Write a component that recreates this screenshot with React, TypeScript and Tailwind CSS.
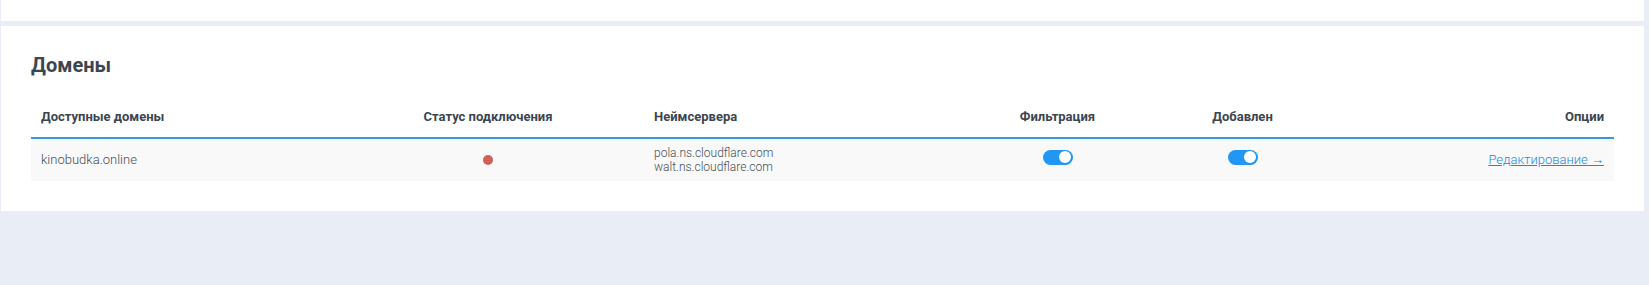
import React from "react";

function Toggle() {
  return (
    <span className="mb-[6px] inline-flex h-[15px] w-[30px] items-center justify-end rounded-full bg-[#2196f3] px-[1.5px]">
      <span className="h-[12px] w-[12px] rounded-full bg-white" />
    </span>
  );
}

export default function App() {
  return (
    <div
      className="min-h-[285px] w-full bg-[#e9edf5] pl-px pr-[5px]"
      style={{ fontFamily: "Roboto, 'Noto Sans', 'Liberation Sans', sans-serif" }}
    >
      <div className="h-[21px] bg-white" />
      <div className="mt-[5px] bg-white px-[30px] pb-[30px] pt-[27px]">
        <h2 className="text-[20px] font-bold leading-[25px] text-[#3d4650]">Домены</h2>
        <div className="mt-[16px]">
          <div className="grid h-[45px] grid-cols-[301px_312px_321px_185px_185px_1fr] items-center border-b-2 border-[#3498db] pt-[2px] text-[13px] font-bold leading-[16px] text-[#3c4550]">
            <div className="pl-[10px]">Доступные домены</div>
            <div className="text-center">Статус подключения</div>
            <div className="pl-[10px]">Неймсервера</div>
            <div className="text-center">Фильтрация</div>
            <div className="text-center">Добавлен</div>
            <div className="pr-[10px] text-right">Опции</div>
          </div>
          <div className="grid h-[42px] grid-cols-[301px_312px_321px_185px_185px_1fr] items-center bg-[#f9f9f9] text-[13px] font-light leading-[16px] text-[#484e55]">
            <div className="pl-[10px]">kinobudka.online</div>
            <div className="flex justify-center">
              <span className="h-[10px] w-[10px] rounded-full bg-[#d1605a]" />
            </div>
            <div className="pl-[10px] text-[12px] leading-[14.5px]">
              <div>pola.ns.cloudflare.com</div>
              <div>walt.ns.cloudflare.com</div>
            </div>
            <div className="flex justify-center">
              <Toggle />
            </div>
            <div className="flex justify-center">
              <Toggle />
            </div>
            <div className="pr-[10px] text-right">
              <a href="#" className="text-[#1e88e5] underline">
                Редактирование →
              </a>
            </div>
          </div>
        </div>
      </div>
    </div>
  );
}
